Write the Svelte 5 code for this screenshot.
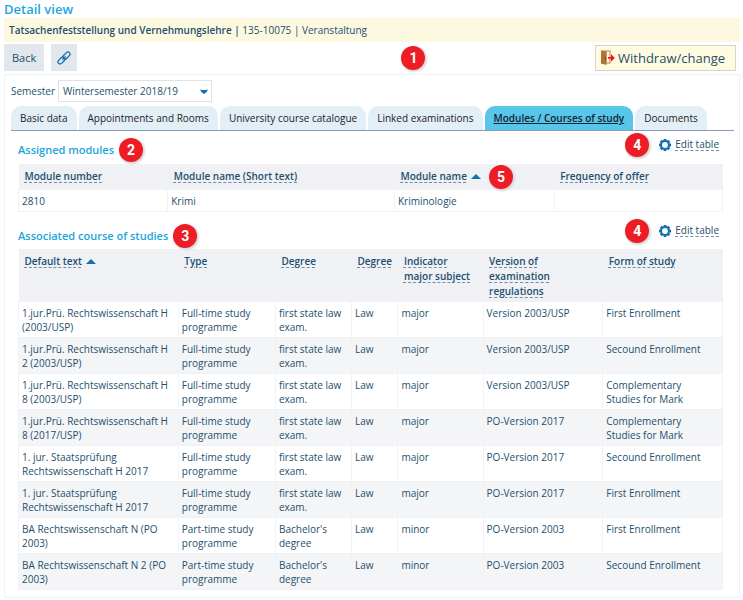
<script>
    let semester = $state('Wintersemester 2018/19');
    let activeTab = $state('Modules / Courses of study');

    const tabs = [
        'Basic data',
        'Appointments and Rooms',
        'University course catalogue',
        'Linked examinations',
        'Modules / Courses of study',
        'Documents',
    ];

    const moduleColumns = [
        { label: 'Module number', width: 21.2 },
        { label: 'Module name (Short text)', width: 32.2 },
        { label: 'Module name', width: 22.7, sorted: true, marker: 5 },
        { label: 'Frequency of offer', width: 23.9 },
    ];

    const modules = [['2810', 'Krimi', 'Kriminologie', '']];

    const courseColumns = [
        { label: 'Default text', width: 22.7, sorted: true },
        { label: 'Type', width: 13.8 },
        { label: 'Degree', width: 10.8 },
        { label: 'Degree', width: 6.6 },
        { label: 'Indicator major subject', width: 12.1 },
        { label: 'Version of examination regulations', width: 17 },
        { label: 'Form of study', width: 17 },
    ];

    const full = 'Full-time study programme';
    const part = 'Part-time study programme';
    const exam = 'first state law exam.';
    const bachelor = "Bachelor's degree";

    const courses = [
        ['1.jur.Prü. Rechtswissenschaft H (2003/USP)', full, exam, 'Law', 'major', 'Version 2003/USP', 'First Enrollment'],
        ['1.jur.Prü. Rechtswissenschaft H 2 (2003/USP)', full, exam, 'Law', 'major', 'Version 2003/USP', 'Secound Enrollment'],
        ['1.jur.Prü. Rechtswissenschaft H 8 (2003/USP)', full, exam, 'Law', 'major', 'Version 2003/USP', 'Complementary Studies for Mark'],
        ['1.jur.Prü. Rechtswissenschaft H 8 (2017/USP)', full, exam, 'Law', 'major', 'PO-Version 2017', 'Complementary Studies for Mark'],
        ['1. jur. Staatsprüfung Rechtswissenschaft H 2017', full, exam, 'Law', 'major', 'PO-Version 2017', 'Secound Enrollment'],
        ['1. jur. Staatsprüfung Rechtswissenschaft H 2017', full, exam, 'Law', 'major', 'PO-Version 2017', 'First Enrollment'],
        ['BA Rechtswissenschaft N (PO 2003)', part, bachelor, 'Law', 'minor', 'PO-Version 2003', 'First Enrollment'],
        ['BA Rechtswissenschaft N 2 (PO 2003)', part, bachelor, 'Law', 'minor', 'PO-Version 2003', 'Secound Enrollment'],
    ];
</script>

{#snippet marker(number)}
    <span class="marker">{number}</span>
{/snippet}

{#snippet sectionHead(title, number)}
    <div class="section-head">
        <h2>{title}</h2>
        {@render marker(number)}
        <div class="edit">
            {@render marker(4)}
            <svg width="12" height="12" viewBox="0 0 12 12" aria-hidden="true">
                <g fill="#1170b4">
                    <rect x="4.6" y="0" width="2.8" height="12" />
                    <rect x="4.6" y="0" width="2.8" height="12" transform="rotate(45 6 6)" />
                    <rect x="4.6" y="0" width="2.8" height="12" transform="rotate(90 6 6)" />
                    <rect x="4.6" y="0" width="2.8" height="12" transform="rotate(135 6 6)" />
                    <circle cx="6" cy="6" r="5" />
                </g>
                <circle cx="6" cy="6" r="2.9" fill="#fff" />
            </svg>
            <a href="#edit">Edit table</a>
        </div>
    </div>
{/snippet}

{#snippet dataTable(columns, rows, label)}
    <table aria-label={label}>
        <colgroup>
            {#each columns as column}
                <col style="width: {column.width}%">
            {/each}
        </colgroup>
        <thead>
            <tr>
                {#each columns as column}
                    <th scope="col" aria-sort={column.sorted ? 'ascending' : undefined}>
                        <div class="th-content">
                            <button class="sort"><span>{column.label}</span></button>
                            {#if column.sorted}
                                <svg width="10" height="5" viewBox="0 0 10 5" aria-hidden="true">
                                    <path d="M0 5 5 0l5 5z" fill="#1170b4" />
                                </svg>
                            {/if}
                            {#if column.marker}
                                {@render marker(column.marker)}
                            {/if}
                        </div>
                    </th>
                {/each}
            </tr>
        </thead>
        <tbody>
            {#each rows as row}
                <tr>
                    {#each row as cell}
                        <td>{cell}</td>
                    {/each}
                </tr>
            {/each}
        </tbody>
    </table>
{/snippet}

<main>
    <h1>Detail view</h1>
    <p class="banner"><strong>Tatsachenfeststellung und Vernehmungslehre |</strong> 135-10075 | Veranstaltung</p>

    <div class="toolbar">
        <button class="tool">Back</button>
        <button class="tool link" aria-label="Link">
            <svg width="14" height="14" viewBox="0 0 14 14" fill="none" stroke="#1170b4" aria-hidden="true">
                <g transform="rotate(-45 7 7)" stroke-width="1.3">
                    <rect x="-0.6" y="4.9" width="8.2" height="4.2" rx="2.1" />
                    <rect x="6.4" y="4.9" width="8.2" height="4.2" rx="2.1" />
                    <path d="M4.5 7h5" stroke-width="1" />
                </g>
            </svg>
        </button>
        <div class="toolbar-marker">{@render marker(1)}</div>
        <button class="withdraw">
            <svg width="15" height="15" viewBox="0 0 15 15" aria-hidden="true">
                <path d="M1 0.5h9.5v13H1z" fill="#b9814b" />
                <path d="M6.5 1.5h3v11h-3z" fill="#fffbe4" />
                <path d="M1 0.5 6.5 2v13L1 13.5z" fill="#b07438" />
                <path d="M4.8 7.2h1v2h-1z" fill="#5f3a17" />
                <path d="M8 7h3V4l3.8 3.9L11 11.8V8.8H8z" fill="#f3151b" />
            </svg>
            Withdraw/change
        </button>
    </div>

    <section class="panel">
        <div class="semester">
            <label for="semester">Semester</label>
            <div class="select-wrap">
                <select id="semester" bind:value={semester}>
                    <option>Wintersemester 2018/19</option>
                    <option>Sommersemester 2019</option>
                </select>
                <svg width="8" height="5" viewBox="0 0 8 5" aria-hidden="true">
                    <path d="M0 0.5q4 1 8 0Q7.5 3 4 5 0.5 3 0 0.5z" fill="#1170b4" />
                </svg>
            </div>
        </div>

        <div class="tabs" role="tablist">
            {#each tabs as tab}
                <button role="tab" class:active={tab === activeTab} aria-selected={tab === activeTab} onclick={() => activeTab = tab}>{tab}</button>
            {/each}
        </div>

        <div class="content">
            {@render sectionHead('Assigned modules', 2)}
            {@render dataTable(moduleColumns, modules, 'Assigned modules')}
            {@render sectionHead('Associated course of studies', 3)}
            <div class="courses">
                {@render dataTable(courseColumns, courses, 'Associated course of studies')}
            </div>
        </div>
    </section>
</main>

<style>
    :global(body) {
        margin: 0;
        background: #fff;
    }

    main {
        padding: 0 3px 4px 4px;
        font-family: "Open Sans", "Noto Sans", sans-serif;
        font-size: 10px;
        line-height: 14px;
        color: #1d4f6e;
    }

    button,
    select {
        font: inherit;
        color: inherit;
        border: 0;
        margin: 0;
        cursor: pointer;
    }

    h1 {
        margin: 0;
        font-size: 13px;
        line-height: 18px;
        font-weight: 600;
        color: #1ba6dc;
    }

    .banner {
        margin: 0;
        padding: 5px;
        background: #fdf8e0;
    }

    .banner strong {
        font-weight: 600;
    }

    .toolbar {
        position: relative;
        display: flex;
        align-items: center;
        gap: 7px;
        padding: 2px 4px 3px 0;
    }

    .tool {
        height: 27px;
        padding: 0 8px;
        background: #e1e7ed;
        font-size: 11px;
    }

    .link {
        padding: 0 6px;
    }

    .link svg {
        display: block;
    }

    .toolbar-marker {
        position: absolute;
        left: 54%;
    }

    .withdraw {
        display: flex;
        align-items: center;
        gap: 3px;
        height: 26px;
        margin-left: auto;
        padding: 0 10px 0 4px;
        border: 1px solid #d5d5d0;
        background: #fffbe0;
        font-size: 13px;
    }

    .marker {
        display: block;
        flex: none;
        width: 24px;
        height: 24px;
        border-radius: 50%;
        background: #ee1c25;
        box-shadow: 1px 1px 2px 1px #d8d8d8;
        color: #fff;
        font-family: Roboto, sans-serif;
        font-size: 14px;
        font-weight: 700;
        line-height: 24px;
        text-align: center;
    }

    .panel {
        border: 1px solid #eef1f5;
        padding: 5px 5px 7px 6px;
    }

    .semester {
        display: flex;
        align-items: center;
        gap: 3px;
        padding-bottom: 4px;
    }

    .select-wrap {
        position: relative;
        display: flex;
    }

    .select-wrap svg {
        position: absolute;
        right: 4px;
        top: 9px;
        pointer-events: none;
    }

    select {
        appearance: none;
        width: 154px;
        height: 22px;
        padding: 0 16px 0 4px;
        border: 1px solid #dfe3e7;
        border-radius: 0;
        background: #fff;
    }

    .tabs {
        display: flex;
        gap: 2px;
        border-bottom: 1px solid #8b9bba;
    }

    .tabs button {
        height: 24px;
        padding: 0 9px;
        border-radius: 10px 10px 0 0;
        background: #e3eff7;
        color: #222;
        white-space: nowrap;
    }

    .tabs .active {
        background: #58c5ea;
        color: #10242f;
        font-weight: 600;
        text-decoration: underline;
    }

    .content {
        padding: 0 11px 0 7px;
    }

    .section-head {
        display: flex;
        align-items: center;
        gap: 5px;
        height: 33px;
        padding-top: 4px;
        box-sizing: border-box;
    }

    table + .section-head {
        height: 37px;
        padding-top: 10px;
    }

    h2 {
        margin: 0;
        font-size: 11px;
        line-height: 14px;
        font-weight: 600;
        color: #1ba6dc;
    }

    .edit {
        display: flex;
        align-items: center;
        gap: 4px;
        margin: -10px 4px 0 auto;
    }

    .edit .marker {
        margin-right: 6px;
    }

    .edit a {
        color: inherit;
        line-height: 12px;
        text-decoration: none;
        border-bottom: 1px dashed #6f8ea3;
    }

    table {
        width: 100%;
        table-layout: fixed;
        border-collapse: collapse;
    }

    th {
        padding: 5px 6px;
        background: #eff1f5;
        font-weight: 600;
        line-height: 15px;
        text-align: left;
        vertical-align: top;
    }

    .courses th {
        padding-bottom: 2px;
    }

    .th-content {
        display: flex;
        align-items: center;
        gap: 4px;
    }

    .th-content .marker {
        margin: -5px 0 -5px 4px;
    }

    .sort {
        padding: 0;
        background: none;
        text-align: left;
    }

    .sort span {
        text-decoration: underline dashed 1px #6f8ea3;
        text-underline-offset: 2px;
    }

    td {
        padding: 4px 6px 3px 3px;
        border: 1px solid #f0f2f5;
        vertical-align: top;
    }

    .courses td {
        height: 28px;
    }

    tbody tr:nth-child(even) {
        background: #f4f5f7;
    }
</style>
